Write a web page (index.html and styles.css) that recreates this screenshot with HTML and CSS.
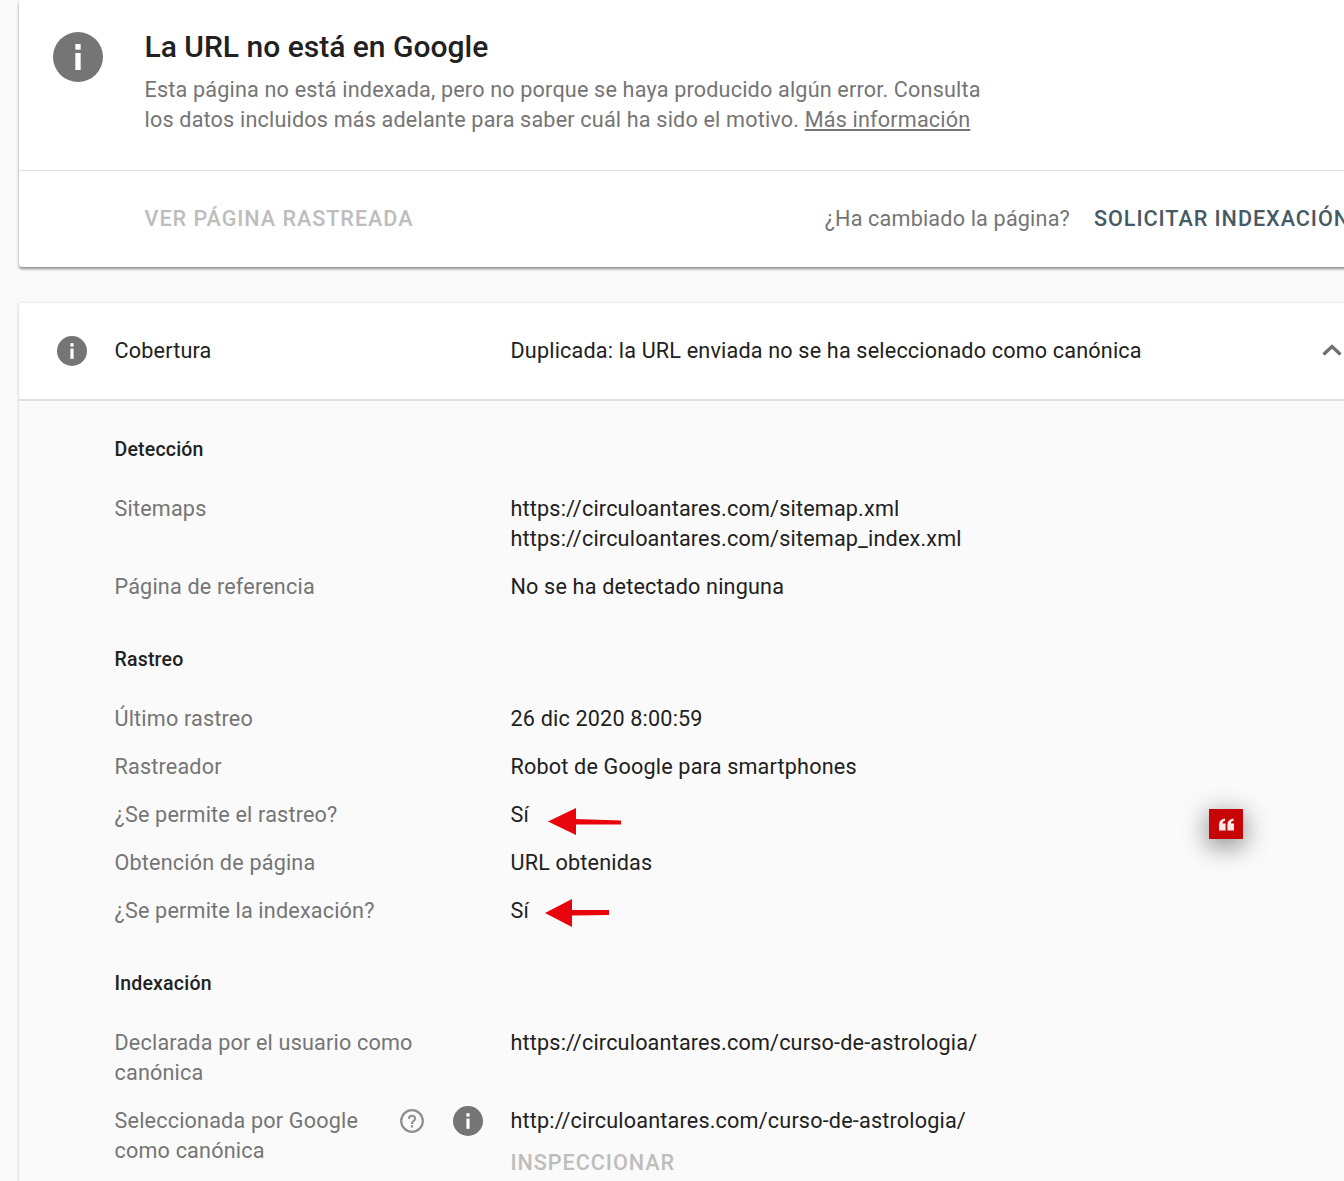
FILE: index.html
```html
<!DOCTYPE html>
<html lang="es">
<head>
<meta charset="utf-8">
<title>Inspección de URLs</title>
<link rel="stylesheet" href="styles.css">
</head>
<body>
<svg class="defs" width="0" height="0" aria-hidden="true">
  <symbol id="info" viewBox="0 0 30 30">
    <circle cx="15" cy="15" r="15" fill="currentColor"/>
    <rect x="13.4" y="7.2" width="3.2" height="3.4" fill="#fff"/>
    <rect x="13.4" y="12.6" width="3.2" height="10.2" fill="#fff"/>
  </symbol>
</svg>
<main class="page">
  <section class="card summary">
    <div class="summary-main">
      <svg class="icon-lg"><use href="#info"/></svg>
      <div class="summary-text">
        <h1 class="title">La URL no está en Google</h1>
        <p class="desc">Esta página no está indexada, pero no porque se haya producido algún error. Consulta<br>los datos incluidos más adelante para saber cuál ha sido el motivo. <a class="link" href="#">Más información</a></p>
      </div>
    </div>
    <div class="summary-actions">
      <span class="btn btn-muted">VER PÁGINA RASTREADA</span>
      <span class="changed">¿Ha cambiado la página?</span>
      <span class="btn btn-strong">SOLICITAR INDEXACIÓN</span>
    </div>
  </section>

  <section class="card coverage">
    <header class="coverage-head">
      <svg class="icon-md"><use href="#info"/></svg>
      <span class="coverage-label">Cobertura</span>
      <span class="coverage-value">Duplicada: la URL enviada no se ha seleccionado como canónica</span>
      <svg class="chevron" viewBox="0 0 20 12"><path d="M1.5 10.5 L10 2.5 L18.5 10.5" fill="none" stroke="#6f6f6f" stroke-width="3.2"/></svg>
    </header>
    <div class="details">
      <h2 class="sec-title">Detección</h2>
      <div class="rows">
        <div class="row"><div class="lbl">Sitemaps</div><div class="val">https://circuloantares.com/sitemap.xml<br>https://circuloantares.com/sitemap_index.xml</div></div>
        <div class="row"><div class="lbl">Página de referencia</div><div class="val">No se ha detectado ninguna</div></div>
      </div>
      <h2 class="sec-title">Rastreo</h2>
      <div class="rows">
        <div class="row"><div class="lbl">Último rastreo</div><div class="val">26 dic 2020 8:00:59</div></div>
        <div class="row"><div class="lbl">Rastreador</div><div class="val">Robot de Google para smartphones</div></div>
        <div class="row"><div class="lbl">¿Se permite el rastreo?</div><div class="val val-mark">Sí
          <svg class="arrow arrow-a" viewBox="0 0 74 28"><path d="M0 13.5 L28 0 L28 11 L73 12.500 L73 16.500 L28 16.500 L28 27 Z" fill="#e8040c"/></svg></div></div>
        <div class="row"><div class="lbl">Obtención de página</div><div class="val">URL obtenidas</div></div>
        <div class="row"><div class="lbl">¿Se permite la indexación?</div><div class="val val-mark">Sí
          <svg class="arrow arrow-b" viewBox="0 0 65 28"><path d="M0 14 L27 0 L27 11 L64 11 L64 16 L27 16.500 L27 28 Z" fill="#e8040c"/></svg></div></div>
      </div>
      <h2 class="sec-title">Indexación</h2>
      <div class="rows">
        <div class="row"><div class="lbl">Declarada por el usuario como<br>canónica</div><div class="val">https://circuloantares.com/curso-de-astrologia/</div></div>
        <div class="row">
          <div class="lbl lbl-icons">
            <span class="lbl-text">Seleccionada por Google<br>como canónica</span>
            <svg class="icon-help" viewBox="0 0 24 24"><circle cx="12" cy="12" r="10.800" fill="none" stroke="#8f8f8f" stroke-width="2.200"/><path d="M7.800 9.700 C7.800 7.200 9.700 5.700 12 5.700 C14.400 5.700 16.200 7.200 16.200 9.400 C16.200 12 13.100 12.100 13.100 15 H10.900 C10.900 11.500 14 11.400 14 9.400 C14 8.400 13.100 7.800 12 7.800 C10.900 7.800 10 8.500 10 9.700 Z M10.900 16.200 H13.100 V18.400 H10.900 Z" fill="#8f8f8f"/></svg>
            <svg class="icon-md2"><use href="#info"/></svg>
          </div>
          <div class="val">http://circuloantares.com/curso-de-astrologia/<span class="btn btn-muted inspect">INSPECCIONAR</span></div>
        </div>
      </div>
    </div>
  </section>
</main>
<div class="quote-badge"><svg viewBox="0 0 16 13" width="15" height="13"><path d="M0 13 V6.500 C0 2.800 2.200 .6 6.500 0 V2.600 C4.800 2.900 3.900 3.800 3.800 5.300 H7 V13 Z M9 13 V6.500 C9 2.800 11.200 .6 15.500 0 V2.600 C13.800 2.900 12.900 3.800 12.800 5.300 H16 V13 Z" fill="#fbeaea"/></svg></div>
</body>
</html>
```
FILE: styles.css
```css
html, body { margin: 0; height: 1181px; overflow: hidden; }
body {
  position: relative;
  background: #fafafa;
  font-family: Roboto, "Liberation Sans", sans-serif;
  font-size: 21.6px;
  letter-spacing: .18px;
  line-height: 30px;
  color: #212121;
}
.defs { position: absolute; }
.page { width: 1500px; padding-left: 19px; }
.card { background: #fff; border-radius: 3px; }
.summary { box-shadow: 0 2px 3px rgba(0,0,0,.45); height: 267px; }
.summary-main { display: flex; height: 170px; border-bottom: 1px solid #e0e0e0; box-sizing: content-box; }
.icon-lg { width: 50px; height: 50px; margin: 32px 0 0 34px; color: #757575; flex: none; }
.summary-text { margin-left: 41.500px; width: 900px; padding-top: 29px; }
.title { margin: 0; font-size: 30px; letter-spacing: 0; line-height: 36px; font-weight: 500; color: #212121; }
.desc { margin: 10px 0 0; color: #757575; }
.link { color: #757575; text-decoration: underline; }
.summary-actions { display: flex; align-items: center; height: 96px; padding-left: 125.500px; }
.btn { font-weight: 500; letter-spacing: .95px; }
.btn-muted { color: #bdbdbd; }
.btn-strong { color: #455a64; }
.changed { color: #757575; margin-left: auto; margin-right: 24px; }
.summary-actions .btn-strong { margin-right: 169px; }
.coverage { margin-top: 36px; background: #fafafa; box-shadow: -1px 0 2px rgba(0,0,0,.12), 0 -1px 2px rgba(0,0,0,.04); height: 878px; border-radius: 3px 3px 0 0; overflow: hidden; }
.coverage-head { display: flex; align-items: center; height: 95px; padding-bottom: 1px; background: #fff; border-bottom: 2px solid #e0e0e0; padding-left: 38px; box-sizing: content-box; }
.icon-md { width: 30px; height: 30px; color: #757575; flex: none; }
.coverage-label { margin-left: 27.500px; width: 396px; flex: none; }
.chevron { position: absolute; left: 1322px; top: 344px; width: 20px; height: 12px; }
.details { padding: 34px 0 0 95.500px; }
.sec-title { margin: 0 0 29px; font-size: 19.500px; letter-spacing: .2px; line-height: 30px; font-weight: 500; color: #212121; }
.rows { display: flex; flex-direction: column; gap: 18px; margin-bottom: 43px; }
.row { display: grid; grid-template-columns: 396px 1fr; }
.lbl { color: #757575; }
.lbl-icons { display: flex; align-items: flex-start; }
.lbl-text { width: 285.500px; flex: none; }
.icon-help { width: 24px; height: 24px; margin-top: 3px; flex: none; }
.icon-md2 { width: 30px; height: 30px; margin: 0 0 0 29px; color: #757575; flex: none; }
.val { position: relative; }
.val-mark { display: flex; }
.inspect { display: block; margin-top: 12px; }
.arrow { position: absolute; }
.arrow-a { left: 37.500px; top: 8px; width: 74px; height: 28px; }
.arrow-b { left: 34.500px; top: 3px; width: 65px; height: 28px; }
.quote-badge {
  position: absolute; left: 1209px; top: 809px; width: 34px; height: 30px;
  background: #c70505; display: flex; align-items: center; justify-content: center;
  box-shadow: 0 6px 24px 2px rgba(0,0,0,.42);
}
```
